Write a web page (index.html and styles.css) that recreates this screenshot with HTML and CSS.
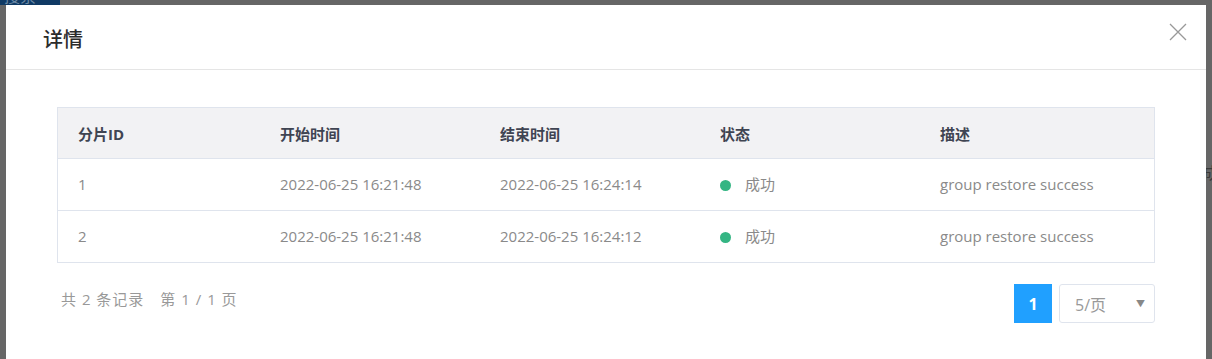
FILE: index.html
```html
<!DOCTYPE html>
<html lang="zh-CN">
<head>
    <meta charset="UTF-8">
    <title>详情</title>
    <link rel="stylesheet" href="styles.css">
</head>
<body>
    <!-- page behind the mask -->
    <div class="page-behind">
        <span class="search-btn">搜索</span>
        <span class="behind-text">成</span>
    </div>

    <div class="modal">
        <div class="modal-header">
            <h3 class="modal-title">详情</h3>
            <span class="modal-close">
                <svg width="18" height="18" viewBox="0 0 18 18"><path d="M1 1L17 17M17 1L1 17" stroke="#999" stroke-width="1.3" fill="none"/></svg>
            </span>
        </div>
        <div class="modal-body">
            <table class="detail-table">
                <thead>
                    <tr>
                        <th class="col-id">分片ID</th>
                        <th class="col-time">开始时间</th>
                        <th class="col-time">结束时间</th>
                        <th class="col-time">状态</th>
                        <th>描述</th>
                    </tr>
                </thead>
                <tbody>
                    <tr>
                        <td>1</td>
                        <td>2022-06-25 16:21:48</td>
                        <td>2022-06-25 16:24:14</td>
                        <td><span class="dot"></span>成功</td>
                        <td>group restore success</td>
                    </tr>
                    <tr>
                        <td>2</td>
                        <td>2022-06-25 16:21:48</td>
                        <td>2022-06-25 16:24:12</td>
                        <td><span class="dot"></span>成功</td>
                        <td>group restore success</td>
                    </tr>
                </tbody>
            </table>

            <div class="table-footer">
                <div class="total">共 2 条记录　第 1 / 1 页</div>
                <div class="pager">
                    <span class="page-num">1</span>
                    <div class="page-size">
                        <span>5/页</span>
                        <span class="arrow">▼</span>
                    </div>
                </div>
            </div>
        </div>
    </div>
</body>
</html>
```

FILE: styles.css
```css
body {
    margin: 0;
    background-color: #666;
    font-family: "Open Sans", "Noto Sans CJK SC", sans-serif;
    overflow: hidden;
    position: relative;
    height: 359px;
}
.page-behind {
    position: absolute;
    top: 0;
    left: 0;
    right: 0;
    height: 359px;
}
.search-btn {
    position: absolute;
    top: -12px;
    left: 0;
    width: 60px;
    height: 17px;
    background-color: #103a64;
    color: #6d8aa6;
    font-size: 16px;
    line-height: 17px;
    padding-left: 4px;
    box-sizing: border-box;
}
.behind-text {
    position: absolute;
    top: 160px;
    left: 1203px;
    color: #3a3a3a;
    font-size: 16px;
}
.modal {
    position: relative;
    margin: 5px 0 0 6px;
    width: 1200px;
    height: 360px;
    background: #fff;
}
.modal-header {
    display: flex;
    align-items: center;
    justify-content: space-between;
    height: 64px;
    padding: 0 19px 0 37px;
    border-bottom: 1px solid #e5e5e5;
}
.modal-title {
    margin: 0;
    font-size: 20px;
    font-weight: 500;
    color: #2b2b2b;
    padding-top: 3px;
}
.modal-close {
    display: flex;
    margin-top: -10px;
}
.modal-body {
    padding: 37px 51px 0;
}
.detail-table {
    width: 100%;
    border-collapse: collapse;
    border: 1px solid #dfe4ed;
    font-size: 15px;
    text-align: left;
}
.detail-table th {
    height: 50px;
    background-color: #f2f2f4;
    color: #3f4452;
    font-weight: 700;
    padding: 0 20px;
    border-bottom: 1px solid #dfe4ed;
}
.detail-table td {
    height: 49px;
    padding: 0 20px 2px;
    color: #8a8a8a;
    border-bottom: 1px solid #dfe4ed;
}
.col-id {
    width: 162px;
}
.col-time {
    width: 180px;
}
.dot {
    display: inline-block;
    width: 11px;
    height: 11px;
    border-radius: 50%;
    background-color: #34b583;
    margin-right: 14px;
    vertical-align: -1px;
}
.table-footer {
    display: flex;
    justify-content: space-between;
    margin-top: 21px;
}
.total {
    font-size: 15px;
    letter-spacing: 1px;
    color: #999;
    padding-left: 4px;
    line-height: 30px;
}
.pager {
    display: flex;
    gap: 7px;
}
.page-num {
    width: 38px;
    height: 39px;
    background-color: #20a0ff;
    color: #fff;
    font-size: 16px;
    font-weight: 700;
    display: flex;
    align-items: center;
    justify-content: center;
}
.page-size {
    width: 96px;
    height: 39px;
    box-sizing: border-box;
    border: 1px solid #dfe4ed;
    border-radius: 3px;
    display: flex;
    align-items: center;
    justify-content: space-between;
    padding: 0 9px 0 15px;
    font-size: 16px;
    color: #999;
}
.arrow {
    font-size: 9px;
    color: #888;
}
```
